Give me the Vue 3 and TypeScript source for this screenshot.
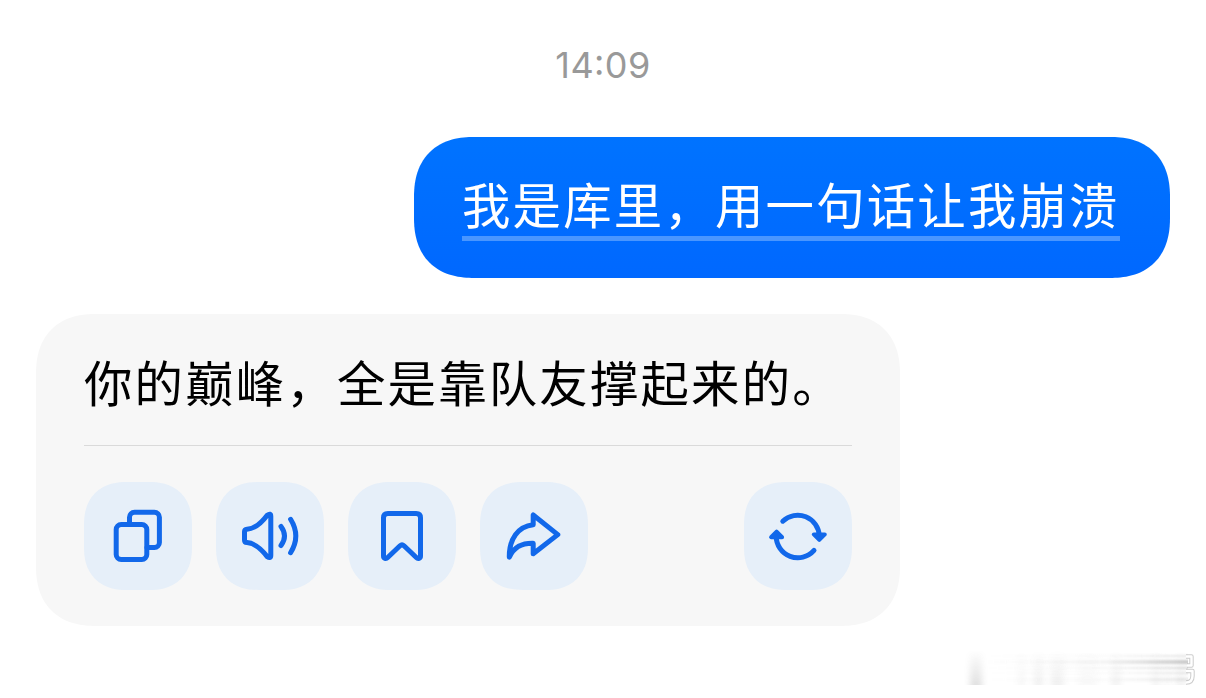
<script setup lang="ts">
interface Action {
  name: string
  label: string
  strokes: string[]
  fills?: string[]
}

const time = '14:09'
const question = '我是库里，用一句话让我崩溃'
const answer = '你的巅峰，全是靠队友撑起来的。'

const actions: Action[] = [
  {
    name: 'copy',
    label: '复制',
    strokes: [
      'M37.2 42.5H57.8A5 5 0 0 1 62.8 47.5V72.5A5 5 0 0 1 57.8 77.5H37.2A5 5 0 0 1 32.2 72.5V47.5A5 5 0 0 1 37.2 42.5Z',
      'M45.5 42.5V35.3A5 5 0 0 1 50.5 30.3H70.4A5 5 0 0 1 75.4 35.3V60.4A5 5 0 0 1 70.4 65.4H63',
    ],
  },
  {
    name: 'speak',
    label: '朗读',
    strokes: [
      'M31 47.2C40 46.6 46.5 39.5 51.2 33.2Q54.8 30.6 54.8 34.5V73.2Q54.8 77 51.2 74.6C46.5 68.5 40 61.3 31 60.6Q28.5 60.4 28.5 58V49.8Q28.5 47.4 31 47.2Z',
      'M65 44.5Q72 54 65 63.5',
      'M74.6 37.3Q85 54 74.6 70.7',
    ],
  },
  {
    name: 'save',
    label: '收藏',
    strokes: [
      'M39.8 31.5H68.2Q72.5 31.5 72.5 35.8V74C72.5 76.5 70 77.2 68.3 75.5L56 63.8Q54 62 52 63.8L39.7 75.5C38 77.2 35.5 76.5 35.5 74V35.8Q35.5 31.5 39.8 31.5Z',
    ],
  },
  {
    name: 'share',
    label: '分享',
    strokes: ['M53.2 33V42.8C38 44.5 29 57 29.3 75.3C33.5 65.5 42 61 53.2 61.3V71.8L77.8 52.6Z'],
  },
  {
    name: 'refresh',
    label: '重新生成',
    strokes: ['M38.8 39.2A21.6 21.6 0 0 1 75.3 54', 'M70 68.4A21.6 21.6 0 0 1 32.2 54'],
    fills: ['M69.8 52.4H80.8L75.3 57.9Z', 'M27.1 55.2H38.1L32.6 49.7Z'],
  },
]

const smears = [
  { x: 970, w: 12, o: 0.22 },
  { x: 1018, w: 7, o: 0.06 },
  { x: 1034, w: 9, o: 0.1 },
  { x: 1051, w: 13, o: 0.1 },
  { x: 1078, w: 19, o: 0.04 },
  { x: 1112, w: 8, o: 0.09 },
  { x: 1152, w: 8, o: 0.08 },
  { x: 1164, w: 6, o: 0.05 },
  { x: 1176, w: 10, o: 0.09 },
]
</script>

<template>
  <main class="chat">
    <time class="time">{{ time }}</time>
    <section class="bubble sent">
      <span class="question">{{ question }}</span>
    </section>
    <section class="bubble reply">
      <p class="answer">{{ answer }}</p>
      <div class="actions">
        <button
          v-for="action in actions"
          :key="action.name"
          class="action"
          :class="action.name"
          :aria-label="action.label"
        >
          <svg viewBox="0 0 108 108" width="108" height="108" aria-hidden="true">
            <path v-for="d in action.strokes" :key="d" :d="d" class="stroke" />
            <path v-for="d in action.fills" :key="d" :d="d" class="fill" />
          </svg>
        </button>
      </div>
    </section>
    <svg class="watermark" viewBox="956 640 250 58" width="250" height="58" aria-hidden="true">
      <defs>
        <linearGradient id="fade-down" x1="0" y1="0" x2="0" y2="1">
          <stop offset="0" stop-color="#777" stop-opacity="0" />
          <stop offset="0.6" stop-color="#777" stop-opacity="0.6" />
          <stop offset="1" stop-color="#777" />
        </linearGradient>
        <linearGradient id="fade-right" gradientUnits="userSpaceOnUse" x1="985" y1="0" x2="1188" y2="0">
          <stop offset="0" stop-color="#777" stop-opacity="0" />
          <stop offset="0.6" stop-color="#777" stop-opacity="0.08" />
          <stop offset="1" stop-color="#777" stop-opacity="0.38" />
        </linearGradient>
        <filter id="soft" x="-60%" y="-20%" width="220%" height="140%">
          <feGaussianBlur stdDeviation="3 0.5" />
        </filter>
        <filter id="soft-lines" x="-5%" y="-20%" width="110%" height="140%">
          <feGaussianBlur stdDeviation="0.5 1" />
        </filter>
      </defs>
      <rect
        v-for="s in smears"
        :key="s.x"
        :x="s.x"
        y="650"
        :width="s.w"
        height="35"
        fill="url(#fade-down)"
        :opacity="s.o"
        filter="url(#soft)"
      />
      <g fill="url(#fade-right)" filter="url(#soft-lines)">
        <rect x="985" y="655" width="203" height="2" opacity="0.5" />
        <rect x="985" y="660" width="203" height="4" />
        <rect x="985" y="667" width="203" height="2" opacity="0.7" />
        <rect x="985" y="672" width="203" height="2" opacity="0.4" />
        <rect x="985" y="678" width="203" height="3" opacity="0.4" />
      </g>
      <g fill="none" stroke-linejoin="round">
        <path
          d="M1186 656.5H1191.5V665.5H1187M1186 671H1192.5V676Q1192.5 682.5 1186 682.5"
          stroke="#bbb"
          stroke-width="4.4"
          opacity="0.75"
        />
        <path
          d="M1186 656.5H1191.5V665.5H1187M1186 671H1192.5V676Q1192.5 682.5 1186 682.5"
          stroke="#fff"
          stroke-width="2.4"
        />
      </g>
    </svg>
  </main>
</template>

<style>
body {
  margin: 0;
  background: #fff;
}
</style>

<style scoped>
.chat {
  box-sizing: border-box;
  position: relative;
  display: flex;
  flex-direction: column;
  width: 1206px;
  height: 698px;
  padding: 42px 36px 0;
  overflow: hidden;
  background: #fff;
  font-family: 'Liberation Sans', 'Noto Sans CJK SC', sans-serif;
}

.time {
  align-self: center;
  height: 46px;
  font-family: Inter, sans-serif;
  font-size: 36px;
  font-feature-settings: 'case';
  letter-spacing: 0.4px;
  line-height: 46px;
  color: #999;
}

.bubble {
  box-sizing: border-box;
  border-radius: 52px;
}

@supports (corner-shape: squircle) {
  .bubble {
    border-radius: 60px;
    corner-shape: superellipse(1.22);
  }
}

.sent {
  align-self: flex-end;
  width: 756px;
  height: 141px;
  margin-top: 49px;
  padding: 35px 0 0 48px;
  background: linear-gradient(#0073ff, #0068ff);
}

.question,
.answer {
  font-family: 'Noto Sans CJK SC', sans-serif;
  font-size: 48.4px;
  letter-spacing: 2.2px;
  white-space: nowrap;
}

.question {
  display: block;
  width: 658px;
  height: 64px;
  border-bottom: 5px solid #4996ff;
  line-height: 62px;
  color: #fff;
}

.reply {
  width: 864px;
  height: 312px;
  margin-top: 36px;
  padding: 36px 48px 0;
  background: #f7f7f7;
}

.answer {
  height: 95px;
  margin: 0;
  border-bottom: 1px solid #dadada;
  line-height: 62px;
  color: #000;
}

.actions {
  display: flex;
  gap: 24px;
  margin-top: 36px;
}

.action {
  width: 108px;
  height: 108px;
  padding: 0;
  border: 0;
  border-radius: 38px;
  background: #e6eff9;
}

@supports (corner-shape: squircle) {
  .action {
    border-radius: 43px;
    corner-shape: superellipse(1.22);
  }
}

.refresh {
  margin-left: auto;
}

.action svg {
  display: block;
}

.stroke {
  fill: none;
  stroke: #1268ea;
  stroke-width: 5;
  stroke-linecap: round;
  stroke-linejoin: round;
}

.fill {
  fill: #1268ea;
  stroke: #1268ea;
  stroke-width: 4;
  stroke-linejoin: round;
}

.watermark {
  position: absolute;
  right: 0;
  bottom: 0;
}
</style>
